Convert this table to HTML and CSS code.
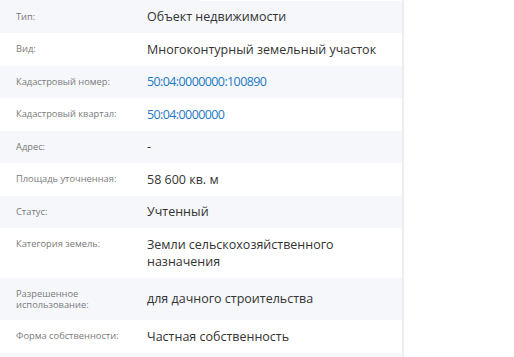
FILE: index.html
```
<!DOCTYPE html>
<html lang="ru">
<head>
<meta charset="utf-8">
<link rel="stylesheet" href="styles.css">
</head>
<body>
<div class="panel">
  <div class="topline"><div class="topline-left"></div></div>
  <div class="row"><div class="label">Тип:</div><div class="value">Объект недвижимости</div></div>
  <div class="row"><div class="label">Вид:</div><div class="value">Многоконтурный земельный участок</div></div>
  <div class="row"><div class="label">Кадастровый номер:</div><div class="value link">50:04:0000000:100890</div></div>
  <div class="row"><div class="label">Кадастровый квартал:</div><div class="value link">50:04:0000000</div></div>
  <div class="row"><div class="label">Адрес:</div><div class="value">-</div></div>
  <div class="row"><div class="label">Площадь уточненная:</div><div class="value">58 600 кв. м</div></div>
  <div class="row"><div class="label">Статус:</div><div class="value">Учтенный</div></div>
  <div class="row"><div class="label">Категория земель:</div><div class="value">Земли сельскохозяйственного назначения</div></div>
  <div class="row"><div class="label">Разрешенное использование:</div><div class="value">для дачного строительства</div></div>
  <div class="row"><div class="label">Форма собственности:</div><div class="value">Частная собственность</div></div>
  <div class="row"><div class="label">&nbsp;</div><div class="value">&nbsp;</div></div>
</div>
</body>
</html>
```
FILE: styles.css
```
html, body {
  margin: 0;
  padding: 0;
  background: #ffffff;
  height: 100%;
  overflow: hidden;
}
body {
  font-family: "Open Sans", "Noto Sans", sans-serif;
}
.panel {
  width: 402px;
  height: 100%;
  border-right: 2px solid #ededed;
  background: #ffffff;
}
.topline {
  height: 1px;
  background: #ffffff;
}
.topline-left {
  width: 200px;
  height: 1px;
  background: #f5f7fa;
}
.row {
  display: grid;
  grid-template-columns: 131px 1fr;
  padding: 7.5px 0 7.5px 16px;
}
.row:nth-child(2) {
  padding-top: 7px;
}
.row:nth-child(even) {
  background: #f5f7fa;
}
.label {
  font-size: 9.3px;
  line-height: 10.5px;
  color: #7a7a7a;
  align-self: start;
  padding: 3.5px 10px 2.5px 0;
}
.value {
  font-size: 12.5px;
  line-height: 17.5px;
  color: #333333;
  align-self: center;
  padding-right: 10px;
}
.link {
  color: #1f78c4;
  letter-spacing: -0.6px;
}
```
